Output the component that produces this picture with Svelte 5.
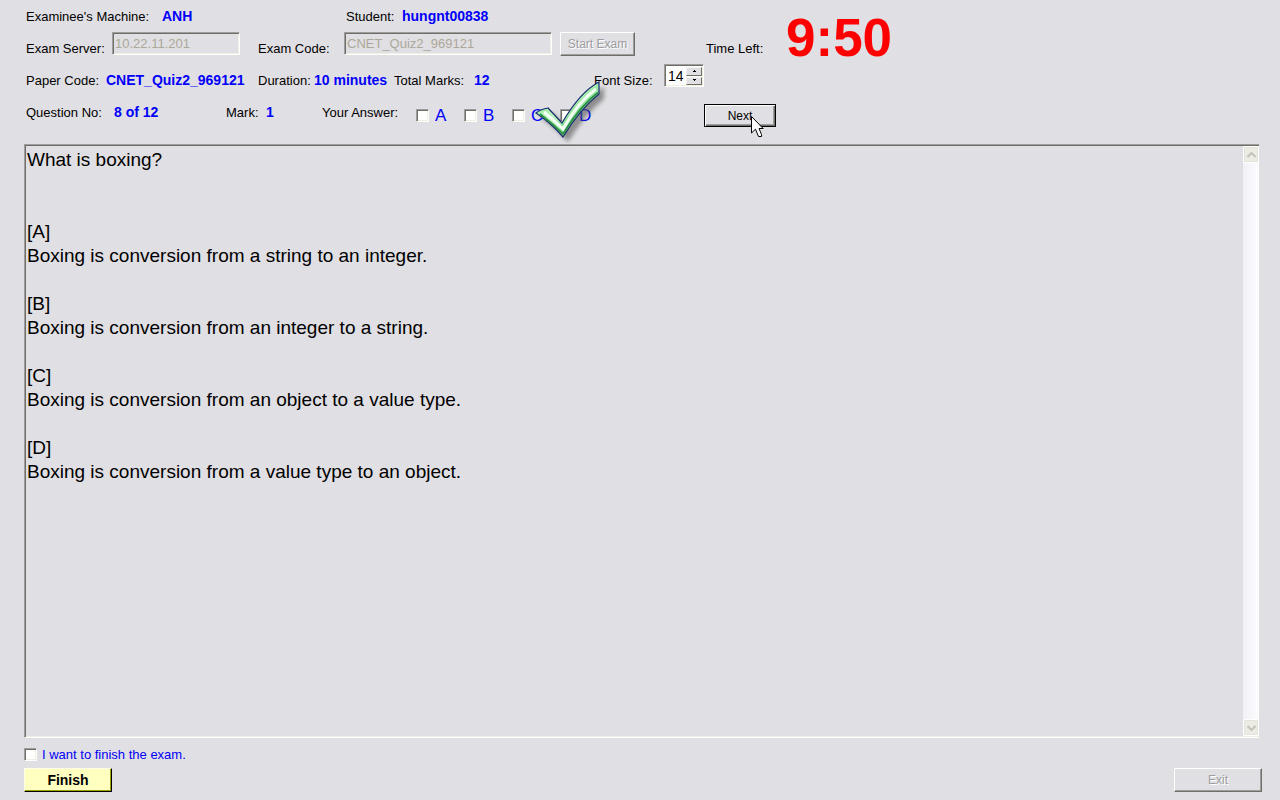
<script>
  let question = $state(`What is boxing?


[A]
Boxing is conversion from a string to an integer.

[B]
Boxing is conversion from an integer to a string.

[C]
Boxing is conversion from an object to a value type.

[D]
Boxing is conversion from a value type to an object.`);
  const answers = ['A', 'B', 'C', 'D'];
  let fontSize = $state(14);
</script>

<main>
  <header>
    <div class="row student">
      <span>Examinee's Machine:</span><b>ANH</b>
      <span>Student:</span><b>hungnt00838</b>
    </div>

    <div class="row server">
      <label for="server">Exam Server:</label>
      <input class="field" id="server" type="text" value="10.22.11.201" disabled />
      <label for="code">Exam Code:</label>
      <input class="field" id="code" type="text" value="CNET_Quiz2_969121" disabled />
      <button class="btn start" disabled>Start Exam</button>
      <span>Time Left:</span>
      <strong class="clock">9:50</strong>
    </div>

    <div class="row paper">
      <span>Paper Code:</span><b>CNET_Quiz2_969121</b>
      <span>Duration:</span><b>10 minutes</b>
      <span>Total Marks:</span><b>12</b>
      <label for="size">Font Size:</label>
      <div class="spinner">
        <input id="size" type="text" bind:value={fontSize} />
        <div class="steps">
          <button aria-label="Increase font size" onclick={() => fontSize++}>
            <svg width="5" height="3" viewBox="0 0 5 3"><path d="M2 0h1v1h1v1H1V1h1z" /></svg>
          </button>
          <button aria-label="Decrease font size" onclick={() => fontSize--}>
            <svg width="5" height="3" viewBox="0 0 5 3"><path d="M1 0h3v1H3v1H2V1H1z" /></svg>
          </button>
        </div>
      </div>
    </div>

    <div class="row question">
      <span>Question No:</span><b>8 of 12</b>
      <span>Mark:</span><b>1</b>
      <span>Your Answer:</span>
      <div class="answers">
        {#each answers as a}
          <label><input class="tick" type="checkbox" />{a}</label>
        {/each}
        <svg class="check" width="80" height="68" viewBox="0 0 80 68" aria-hidden="true">
          <defs>
            <linearGradient id="green" x1="0" y1="0" x2="1" y2="1">
              <stop offset="0" stop-color="#7be08a" />
              <stop offset=".45" stop-color="#b8f4bc" />
              <stop offset=".65" stop-color="#7cd88c" />
              <stop offset="1" stop-color="#2c8a42" />
            </linearGradient>
            <filter id="soft" x="-20%" y="-20%" width="150%" height="150%">
              <feGaussianBlur stdDeviation="2" />
            </filter>
          </defs>
          <path d="M2 33Q7 29 14 28L28 43Q46 12 65 2V14Q46 29 29 57Q17 43 2 33Z" fill="#555" opacity=".6" transform="translate(5 5)" filter="url(#soft)" />
          <path d="M2 33Q7 29 14 28L28 43Q46 12 65 2V14Q46 29 29 57Q17 43 2 33Z" fill="url(#green)" stroke="#1b2c70" stroke-width="1.2" />
          <path d="M6 34Q18 43 29 54Q46 26 64 12.500" fill="none" stroke="#2a8c45" stroke-width="1.6" />
          <path d="M10 32Q20 40 29 49Q44 22 62 9" fill="none" stroke="#f2fff2" stroke-width="3" />
        </svg>
      </div>
      <div class="next">
        <button class="btn">Next</button>
        <svg class="cursor" width="13" height="22" viewBox="0 0 13 22" aria-hidden="true">
          <path d="M.5 .5V17L4.500 13.200L7.500 20.500H10.500V18.500L8 12.500H12.200Z" fill="#fff" stroke="#000" />
        </svg>
      </div>
    </div>
  </header>

  <section class="paperbox">
    <textarea aria-label="Question" readonly value={question}></textarea>
    <div class="scroll">
      <button disabled aria-label="Scroll up">
        <svg width="9" height="6" viewBox="0 0 9 6"><path d="M.5 5L4.500 1L8.500 5" /></svg>
      </button>
      <button disabled aria-label="Scroll down">
        <svg width="9" height="6" viewBox="0 0 9 6"><path d="M.5 1L4.500 5L8.500 1" /></svg>
      </button>
    </div>
  </section>

  <footer>
    <label class="want"><input class="tick" type="checkbox" /><span>I want to finish the exam.</span></label>
    <div class="actions">
      <button class="btn finish">Finish</button>
      <button class="btn exit" disabled>Exit</button>
    </div>
  </footer>
</main>

<style>
  :global(body) {
    background: #e0dfe3;
  }
  main {
    box-sizing: border-box;
    min-height: 100vh;
    display: flex;
    flex-direction: column;
    padding: 0 18px 8px 24px;
    font: 13px/16px "Liberation Sans", Arial, sans-serif;
    color: #000;
  }
  input, button, textarea {
    box-sizing: border-box;
    font: inherit;
    margin: 0;
    border-radius: 0;
  }
  header {
    padding: 0 0 8px 2px;
  }
  .row {
    display: grid;
    height: 32px;
    box-sizing: border-box;
    align-items: start;
    white-space: nowrap;
  }
  .row > span, .row > label, .row > b {
    padding-top: 9px;
  }
  .student { grid-template-columns: 136px 184px 56px auto; }
  .server { grid-template-columns: 86px 146px 86px 216px 146px 80px auto; }
  .paper { grid-template-columns: 80px 152px 56px 80px 80px 120px 70px auto; }
  .question { grid-template-columns: 88px 112px 40px 56px 94px 288px auto; }
  .row > b {
    padding-top: 8px;
    font-size: 14px;
    color: #0000f8;
  }
  .field {
    width: 128px;
    height: 23px;
    padding: 0 2px;
    border: 1px solid;
    border-color: #9d9da1 #fff #fff #9d9da1;
    box-shadow: inset 1px 1px #716f64, inset -1px -1px #f1efe2;
    background: #e0dfe3;
    color: #aca899;
  }
  #code { width: 208px; }
  .btn {
    height: 24px;
    padding: 0;
    border: 1px solid;
    border-color: #fff #716f64 #716f64 #fff;
    box-shadow: inset -1px -1px #9d9da1;
    background: #e0dfe3;
    color: #000;
    font-size: 12px;
  }
  .btn:disabled {
    color: #9d9da1;
    text-shadow: 1px 1px #fff;
  }
  .start {
    width: 75px;
  }
  .clock {
    margin-top: -24px;
    font-size: 53px;
    line-height: 60px;
    color: #f00;
  }
  .spinner {
    display: flex;
    box-sizing: border-box;
    width: 40px;
    height: 23px;
    padding: 1px;
    border: 1px solid;
    border-color: #9d9da1 #fff #fff #9d9da1;
    background: #fff;
    box-shadow: inset 1px 1px #716f64, inset -1px -1px #f1efe2;
  }
  .spinner input {
    width: 20px;
    border: 0;
    padding: 0 0 0 2px;
    background: none;
    font-size: 14px;
  }
  .steps {
    display: grid;
    flex: 1;
    gap: 1px;
    padding-top: 1px;
  }
  .steps button {
    display: grid;
    place-items: center;
    padding: 0;
    border: 1px solid;
    border-color: #f4f4f6 #716f64 #716f64 #f4f4f6;
    background: #e0dfe3;
  }
  .answers {
    position: relative;
    display: flex;
    padding-top: 10px;
  }
  .answers label {
    display: flex;
    align-items: center;
    gap: 6px;
    width: 48px;
    font-size: 17px;
    line-height: 20px;
    color: #0000f8;
  }
  .tick {
    appearance: none;
    flex: none;
    width: 13px;
    height: 13px;
    border: 1px solid;
    border-color: #9d9da1 #fff #fff #9d9da1;
    background: #fff;
    box-shadow: inset 1px 1px #716f64, inset -1px -1px #f1efe2;
  }
  .answers .tick {
    margin-bottom: 1px;
  }
  .check {
    position: absolute;
    left: 118px;
    top: -16px;
    pointer-events: none;
  }
  .next {
    position: relative;
    width: 72px;
    padding-top: 8px;
  }
  .next .btn {
    width: 100%;
    height: 23px;
    border: 1px solid #000;
    box-shadow: inset 1px 1px #fff, inset -1px -1px #716f64, inset -2px -2px #9d9da1;
  }
  .cursor {
    position: absolute;
    left: 47px;
    top: 20px;
  }
  .paperbox {
    flex: 1;
    display: flex;
    margin: 8px 3px 0 0;
    padding: 1px 0 1px 1px;
    border: solid;
    border-width: 1px 0 1px 1px;
    border-color: #9d9da1 #fff #fff #9d9da1;
    box-shadow: inset 1px 1px #716f64, inset 0 -1px #f1efe2;
  }
  textarea {
    flex: 1;
    resize: none;
    border: 0;
    outline: 0;
    padding: 2px 1px;
    background: none;
    font-size: 19px;
    line-height: 24px;
    color: #000;
  }
  .scroll {
    display: flex;
    flex-direction: column;
    justify-content: space-between;
    width: 16px;
    background: linear-gradient(90deg, #f0f0f6, #fdfdff);
  }
  .scroll button {
    display: grid;
    place-items: center;
    height: 17px;
    padding: 0;
    border: 1px solid #fff;
    border-radius: 2px;
    background: #ecebe4;
    box-shadow: inset 0 0 0 1px #e4e3da;
  }
  .scroll path {
    fill: none;
    stroke: #c4c3bb;
    stroke-width: 2;
  }
  footer {
    padding-top: 8px;
  }
  .want {
    display: flex;
    width: max-content;
    align-items: center;
    gap: 5px;
    color: #0000f8;
  }
  .want span {
    padding-top: 1px;
  }
  .actions {
    display: flex;
    justify-content: space-between;
    margin-top: 5px;
  }
  .actions .btn {
    width: 88px;
  }
  .actions .finish {
    border-color: #ffffe8 #000 #000 #ffffe8;
    box-shadow: inset -1px -1px #a0a000;
    background: #ffffc0;
    font-size: 14px;
    font-weight: bold;
  }
</style>
